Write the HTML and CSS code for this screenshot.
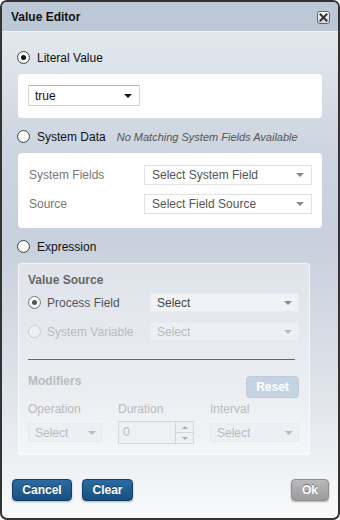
FILE: index.html
```html
<!DOCTYPE html>
<html lang="en">
<head>
  <meta charset="UTF-8" />
  <title>Value Editor</title>
  <link rel="stylesheet" href="styles.css">
</head>
<body>
  <div class="dialog">
    <div class="titlebar">
      <span class="title">Value Editor</span>
      <button class="close-button" title="Close">
        <svg width="9" height="9" viewBox="0 0 9 9"><path d="M1.5 1.5 L7.5 7.5 M7.5 1.5 L1.5 7.5" stroke="#333" stroke-width="2" stroke-linecap="square"/></svg>
      </button>
    </div>

    <div class="dialog-body">
      <div class="option">
        <span class="radio checked"></span>
        <span class="option-label">Literal Value</span>
      </div>
      <div class="panel literal-panel">
        <div class="select select-dark literal-select">
          <span>true</span><span class="arrow"></span>
        </div>
      </div>

      <div class="option spaced">
        <span class="radio"></span>
        <span class="option-label">System Data</span>
        <span class="note">No Matching System Fields Available</span>
      </div>
      <div class="panel fields-panel">
        <div class="field-row">
          <span class="field-label">System Fields</span>
          <div class="select select-light field-select"><span>Select System Field</span><span class="arrow"></span></div>
        </div>
        <div class="field-row">
          <span class="field-label">Source</span>
          <div class="select select-light field-select"><span>Select Field Source</span><span class="arrow"></span></div>
        </div>
      </div>

      <div class="option spaced">
        <span class="radio"></span>
        <span class="option-label">Expression</span>
      </div>
      <div class="panel expr-panel">
        <div class="section-title">Value Source</div>
        <div class="source-row">
          <span class="radio small checked muted"></span>
          <span class="source-label">Process Field</span>
          <div class="select select-expr"><span>Select</span><span class="arrow"></span></div>
        </div>
        <div class="source-row disabled">
          <span class="radio small faded"></span>
          <span class="source-label">System Variable</span>
          <div class="select select-expr"><span>Select</span><span class="arrow"></span></div>
        </div>
        <hr class="divider">
        <div class="mod-head">
          <span class="section-title faded-text">Modifiers</span>
          <button class="reset-button">Reset</button>
        </div>
        <div class="mod-grid">
          <span class="mod-label">Operation</span>
          <span class="mod-label">Duration</span>
          <span class="mod-label">Interval</span>
          <div class="select select-off"><span>Select</span><span class="arrow"></span></div>
          <div class="spinner">
            <span class="spinner-value">0</span>
            <span class="spinner-buttons">
              <span class="spin up"></span>
              <span class="spin down"></span>
            </span>
          </div>
          <div class="select select-off"><span>Select</span><span class="arrow"></span></div>
        </div>
      </div>
    </div>

    <div class="footer">
      <button class="btn btn-blue cancel">Cancel</button>
      <button class="btn btn-blue clear">Clear</button>
      <button class="btn btn-gray ok">Ok</button>
    </div>
  </div>
</body>
</html>
```

FILE: styles.css
```css
body {
  margin: 0;
  font-family: "Liberation Sans", Arial, sans-serif;
  font-size: 12px;
  color: #222;
  background: #fff;
}

.dialog {
  width: 340px;
  height: 520px;
  box-sizing: border-box;
  border: 2px solid #333;
  border-radius: 7px;
  overflow: hidden;
  display: flex;
  flex-direction: column;
  background: linear-gradient(#e3e8ee 6%, #cdd5e0 28%, #c7d0dc 46%, #dfe3ea 75%, #f9fafb 100%);
}

.titlebar {
  height: 29px;
  flex: none;
  display: flex;
  align-items: center;
  padding: 0 8px 0 9px;
  background: #bdc8d6;
  border-bottom: 1px solid #eef1f5;
}

.title {
  flex: 1;
  margin-top: 1px;
  font-weight: bold;
  font-size: 12px;
  color: #111;
}

.close-button {
  width: 13px;
  height: 13px;
  padding: 0;
  margin-top: 1px;
  border: 1px solid #666;
  border-radius: 3px;
  background: linear-gradient(#ffffff, #cfd4da);
  display: flex;
  align-items: center;
  justify-content: center;
}

.dialog-body {
  flex: 1;
  padding: 15px 16px 0 16px;
}

.option {
  height: 20px;
  display: flex;
  align-items: center;
  padding-top: 1px;
  box-sizing: border-box;
}

.option.spaced {
  margin-top: 8px;
}

.radio {
  width: 11px;
  height: 11px;
  margin-left: -1px;
  margin-right: 7px;
  border: 1px solid #444;
  border-radius: 50%;
  background: radial-gradient(circle at 50% 40%, #ffffff 40%, #dcdfe3 100%);
  display: flex;
  align-items: center;
  justify-content: center;
  flex: none;
}

.radio.checked::after {
  content: "";
  width: 5px;
  height: 5px;
  border-radius: 50%;
  background: #111;
}

.radio.small {
  margin-left: 0;
  margin-right: 6px;
}

.radio.muted {
  border-color: #777;
}

.radio.muted::after {
  background: #555;
}

.radio.faded {
  border-color: #c8cdd3;
  background: #eef0f3;
}

.option-label {
  font-size: 12px;
  color: #111;
}

.note {
  margin-left: 11px;
  font-size: 11px;
  font-style: italic;
  color: #555;
}

.panel {
  margin-top: 7px;
  background: #fff;
  border-radius: 4px;
}

.literal-panel {
  height: 44px;
  box-sizing: border-box;
  padding: 11px 10px 0;
}

.select {
  box-sizing: border-box;
  display: flex;
  align-items: center;
  justify-content: space-between;
  background: #fff;
}

.arrow {
  width: 0;
  height: 0;
  border-left: 4px solid transparent;
  border-right: 4px solid transparent;
  border-top: 4px solid #888;
}

.select-dark {
  width: 112px;
  height: 21px;
  padding: 0 7px 0 6px;
  border: 1px solid #d4d4d4;
  border-top-color: #b8b8b8;
  color: #111;
  font-size: 12px;
}

.select-dark .arrow {
  border-top-color: #111;
}

.fields-panel {
  padding: 12px 10px 14px 11px;
  display: flex;
  flex-direction: column;
  gap: 9px;
}

.field-row {
  display: flex;
  align-items: center;
  justify-content: space-between;
}

.field-label {
  color: #777;
  font-size: 12px;
}

.select-light {
  width: 168px;
  height: 20px;
  padding: 0 7px;
  border: 1px solid #e2e2e2;
  color: #555;
  font-size: 12px;
}

.expr-panel {
  margin-right: 12px;
  padding: 9px 10px 10px 9px;
  background: rgba(255, 255, 255, 0.38);
  border: 1px solid rgba(255, 255, 255, 0.6);
}

.section-title {
  display: block;
  line-height: 14px;
  font-weight: bold;
  font-size: 12px;
  color: #666;
}

.faded-text {
  color: #bbb;
}

.source-row {
  height: 19px;
  margin-top: 6px;
  display: flex;
  align-items: center;
}

.source-row + .source-row {
  margin-top: 10px;
}

.source-label {
  flex: 1;
  color: #555;
  font-size: 12px;
}

.source-row.disabled .source-label {
  color: #bbb;
}

.select-expr {
  width: 149px;
  height: 19px;
  padding: 0 6px;
  background: #f0f2f5;
  border: 1px solid #e8ebef;
  color: #444;
}

.source-row.disabled .select-expr {
  background: #eceff3;
  color: #bbb;
}

.source-row.disabled .arrow {
  border-top-color: #bbb;
}

.divider {
  margin: 18px 4px 0 0;
  border: none;
  border-top: 1px solid #666;
  height: 0;
}

.mod-head {
  margin-top: 16px;
  height: 22px;
  display: flex;
  justify-content: space-between;
  align-items: flex-start;
}

.mod-head .section-title {
  margin-top: -2px;
}

.reset-button {
  width: 53px;
  height: 22px;
  padding: 0;
  border: 1px solid #bccbdb;
  border-radius: 4px;
  background: #c5d4e3;
  color: #fff;
  font-family: inherit;
  font-weight: bold;
  font-size: 12px;
}

.mod-grid {
  margin-top: 4px;
  display: grid;
  grid-template-columns: 74px 76px 89px;
  column-gap: 16px;
  row-gap: 5px;
  align-items: center;
}

.mod-label {
  line-height: 14px;
  color: #bbb;
  font-size: 12px;
}

.select-off {
  height: 19px;
  padding: 0 5px 0 6px;
  background: #eceff3;
  border: 1px solid #e6e9ed;
  color: #bbb;
}

.select-off .arrow {
  border-top-color: #bbb;
}

.spinner {
  height: 23px;
  box-sizing: border-box;
  display: flex;
  border: 1px solid #d3d6da;
  background: #eef0f3;
}

.spinner-value {
  flex: 1;
  padding-left: 4px;
  line-height: 21px;
  color: #bbb;
}

.spinner-buttons {
  width: 17px;
  display: flex;
  flex-direction: column;
  border-left: 1px solid #d3d6da;
}

.spin {
  flex: 1;
  display: flex;
  align-items: center;
  justify-content: center;
}

.spin.up {
  border-bottom: 1px solid #d3d6da;
}

.spin.up::after {
  content: "";
  border-left: 3px solid transparent;
  border-right: 3px solid transparent;
  border-bottom: 3px solid #aaa;
}

.spin.down::after {
  content: "";
  border-left: 3px solid transparent;
  border-right: 3px solid transparent;
  border-top: 3px solid #aaa;
}

.footer {
  flex: none;
  display: flex;
  align-items: center;
  gap: 10px;
  padding: 0 9px 17px 10px;
}

.btn {
  height: 22px;
  padding: 0;
  border-radius: 4px;
  font-family: inherit;
  font-weight: bold;
  font-size: 12px;
  color: #fff;
  text-shadow: 0 -1px 0 rgba(0, 0, 0, 0.4);
  box-shadow: 0 1px 2px rgba(0, 0, 0, 0.3);
}

.btn-blue {
  border: 1px solid #10406b;
  background: linear-gradient(#2b6aa3, #17507f);
}

.btn-gray {
  border: 1px solid #8f8f8f;
  background: linear-gradient(#b9b9b9, #9b9b9b);
}

.cancel {
  width: 60px;
}

.clear {
  width: 51px;
}

.ok {
  width: 38px;
  margin-left: auto;
}
```
